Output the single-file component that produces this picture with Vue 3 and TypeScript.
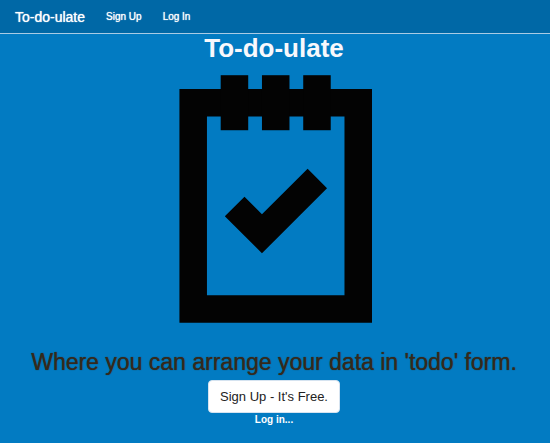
<script setup lang="ts">
interface NavLink {
  label: string
  href: string
}

const appName = 'To-do-ulate'
const navLinks: NavLink[] = [
  { label: 'Sign Up', href: '#signup' },
  { label: 'Log In', href: '#login' },
]
const tabColumns: number[] = [3, 6, 9]

function goToSignUp(): void {
  window.location.hash = 'signup'
}
</script>

<template>
  <div class="page">
    <nav class="navbar">
      <a class="brand" href="#">{{ appName }}</a>
      <a v-for="link in navLinks" :key="link.href" class="nav-link" :href="link.href">{{ link.label }}</a>
    </nav>
    <main class="hero">
      <h1 class="title">{{ appName }}</h1>
      <svg class="notepad" viewBox="-0.25 0 14.25 18" aria-hidden="true">
        <path fill-rule="evenodd" d="M0 1H14V18H0ZM2 3V16H12V3Z" />
        <rect v-for="x in tabColumns" :key="x" :x="x" y="0" width="2" height="4" />
        <path d="M3.3 10.25L4.73 8.83L6 10.1L9.32 6.8L10.73 8.22L6 12.95Z" />
      </svg>
      <h2 class="tagline">Where you can arrange your data in 'todo' form.</h2>
      <button class="signup" type="button" @click="goToSignUp">Sign Up - It's Free.</button>
      <a class="login" href="#login">Log in...</a>
    </main>
  </div>
</template>

<style>
body {
  margin: 0;
  background: #027bc2;
}
</style>

<style scoped>
.page {
  min-height: 100vh;
  background: #027bc2;
  font-family: "Liberation Sans", Arial, sans-serif;
}

.navbar {
  display: flex;
  align-items: center;
  gap: 21px;
  height: 33px;
  padding: 0 15px;
  background: #0068a6;
  border-bottom: 1px solid #a9cbe4;
}

.brand,
.nav-link,
.login {
  color: #fff;
  text-decoration: none;
}

.brand,
.nav-link {
  text-shadow: 0 0 1px #fff;
}

.brand {
  font-size: 14px;
}

.nav-link {
  font-size: 10px;
}

.hero {
  display: flex;
  flex-direction: column;
  align-items: center;
  padding-right: 2px;
}

.title {
  margin: 0;
  font-size: 26px;
  line-height: 28px;
  font-weight: 700;
  color: #f8f8fc;
}

.notepad {
  width: 196px;
  height: 248px;
  margin-top: 13px;
  fill: #030303;
}

.tagline {
  margin: 24px 0 0;
  font-size: 23px;
  line-height: 30px;
  font-weight: 400;
  text-align: center;
  color: #33291c;
  text-shadow: 0 0 1px #33291c;
}

.signup {
  height: 33px;
  margin-top: 3px;
  padding: 0 11px;
  border: 1px solid #d5e3f0;
  border-radius: 4px;
  background: #fff;
  color: #222;
  font-family: inherit;
  font-size: 13px;
}

.login {
  font-size: 10px;
  line-height: 14px;
  font-weight: 700;
}
</style>
